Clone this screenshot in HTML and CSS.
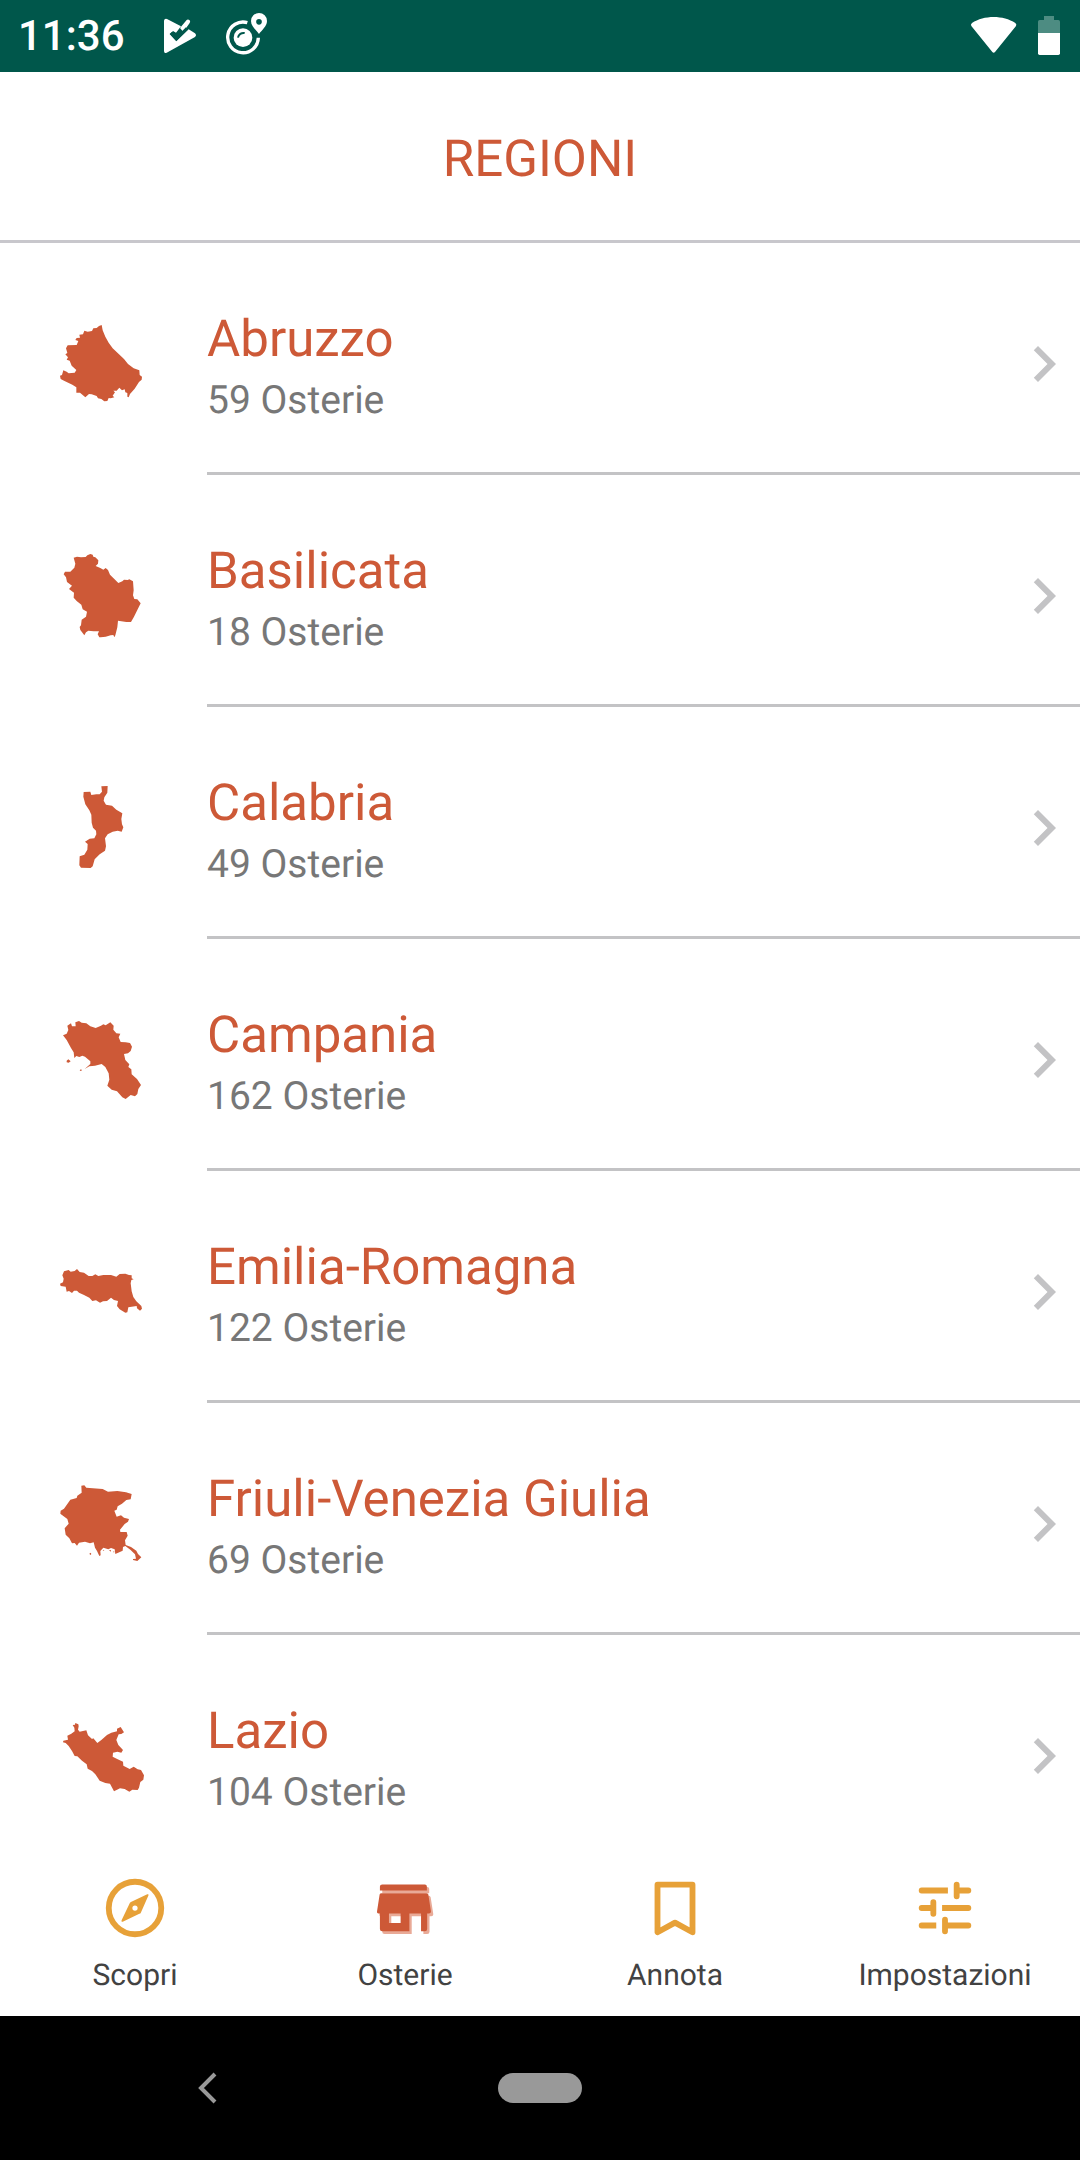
FILE: index.html
```html
<!DOCTYPE html>
<html lang="it">
<head>
<meta charset="utf-8">
<meta name="viewport" content="width=device-width, initial-scale=1">
<title>Regioni</title>
<link rel="stylesheet" href="styles.css">
</head>
<body>
<div class="app">
  <div class="status">
    <span class="clock">11:36</span>
    <svg class="status-play" viewBox="480 0 120 216" aria-hidden="true"><path fill="#fff" d="M492 62Q493 55 501 57L543 79 528 98 519 93 510 102 529 123 566 88 585 100Q591 106 585 111L500 158Q492 161 492 153z"/><path fill="#fff" d="M540 84L560 60Q564 56 569 61 572 65 569 69L550 96z"/><path d="M512 99L529 117 561 85" fill="none" stroke="#00574b" stroke-width="9"/></svg>
    <svg class="status-target" viewBox="672 0 144 216" aria-hidden="true"><path d="M742 68A46 46 0 1 0 775 113" fill="none" stroke="#fff" stroke-width="10"/><circle cx="729" cy="113" r="28" fill="#fff"/><path d="M714 113A17 17 0 0 1 734 99" fill="none" stroke="#00574b" stroke-width="6"/><path fill="#fff" fill-rule="evenodd" d="M777 39A24 24 0 0 1 801 63C801 79 785 91 777 102 769 91 753 79 753 63A24 24 0 0 1 777 39zM777 57A8.500 8.500 0 1 0 777 74 8.500 8.500 0 0 0 777 57z"/></svg>
    <svg class="status-wifi" viewBox="207 0 144 216" aria-hidden="true"><path fill="#fff" d="M214 78Q211 73 216 69C252 45 310 45 346 69Q351 73 348 78L285 156Q281 161 277 156z"/></svg>
    <svg class="status-battery" viewBox="414 0 66 216" aria-hidden="true"><path fill="#4d8c82" d="M414 99V65Q414 60 419 60H432V48H462V60H475Q480 60 480 65V99z"/><path fill="#fff" d="M414 99H480V160Q480 165 475 165H419Q414 165 414 160z"/></svg>
  </div>

  <header class="header"><h1 class="title">REGIONI</h1></header>

  <main class="list-area">
    <ul class="list">
      <li><a class="row" href="#abruzzo">
        <svg class="map" viewBox="60 33 252 252" aria-hidden="true"><path d="M185 45L188 61 196 80 206 98 218 115 237 133 252 147 264 162 281 175 298 181 299 195 306 200 305 209 297 216 284 236 270 252 266 262 262 260 262 249 256 247 254 238 246 241 238 233 230 242 220 242 225 247 218 257 223 262 212 265 206 264 202 273 193 274 184 267 174 265 170 258 155 253 147 252 136 262 120 248 109 248 109 232 97 224 72 212 62 207 60 197 66 195 70 181 80 185 86 190 104 188 109 180 95 167 89 152 80 149 84 142 76 133 82 129 78 115 83 106 110 105 115 93 106 90 110 84 120 83 118 74 129 73 133 62 143 65 156 63 160 55 170 54 177 48z"/></svg>
        <span class="row-body"><span class="row-text"><span class="name">Abruzzo</span><span class="count">59 Osterie</span></span>
        <svg class="chevron" viewBox="0 0 24 24" aria-hidden="true"><path d="M10 6L8.590 7.410 13.170 12l-4.580 4.590L10 18l6-6z"/></svg></span></a></li>
      <li><a class="row" href="#basilicata">
        <svg class="map" viewBox="60 39 252 252" aria-hidden="true"><path d="M101 53L111 50 123 52 137 51 142 46 151 42 158 44 160 50 166 52 175 61 174 71 167 78 181 84 190 89 197 84 204 90 210 104 223 117 235 129 247 124 252 119 263 120 268 118 279 124 281 151 279 166 283 177 292 178 302 190 292 210 282 230 273 246 259 246 234 242 232 262 226 286 223 292 220 285 212 286 197 290 182 292 178 292 173 283 177 274 161 274 145 272 138 277 133 286 121 270 119 261 123 256 125 239 138 230 141 215 128 208 124 194 110 183 101 173 102 158 87 147 96 137 81 126 78 112 71 103 75 95 91 95 103 83 106 71z"/></svg>
        <span class="row-body"><span class="row-text"><span class="name">Basilicata</span><span class="count">18 Osterie</span></span>
        <svg class="chevron" viewBox="0 0 24 24" aria-hidden="true"><path d="M10 6L8.590 7.410 13.170 12l-4.580 4.590L10 18l6-6z"/></svg></span></a></li>
      <li><a class="row" href="#calabria">
        <svg class="map" viewBox="60 45 252 252" aria-hidden="true"><path d="M184 49L203 48 202 68 193 82 191 92 198 104 216 107 229 119 247 130 244 147 246 163 250 172 245 185 233 182 218 185 203 193 195 205 198 229 195 242 179 253 164 268 158 289 152 294 123 293 118 286 119 259 133 254 142 239 143 222 135 215 149 206 163 205 169 193 168 182 159 173 155 158 154 134 148 121 136 103 130 80 131 66 151 65 154 75 169 73 179 73 186 65z"/></svg>
        <span class="row-body"><span class="row-text"><span class="name">Calabria</span><span class="count">49 Osterie</span></span>
        <svg class="chevron" viewBox="0 0 24 24" aria-hidden="true"><path d="M10 6L8.590 7.410 13.170 12l-4.580 4.590L10 18l6-6z"/></svg></span></a></li>
      <li><a class="row" href="#campania">
        <svg class="map" viewBox="60 51 252 252" aria-hidden="true"><path d="M69 106L80 101 85 90 82 77 93 70 96 79 107 79 106 67 117 63 125 68 139 70 151 79 167 84 183 77 190 73 197 76 211 67 221 77 220 89 229 100 241 101 236 112 242 126 257 127 270 129 276 140 272 153 264 160 252 162 256 180 268 193 265 201 274 208 275 223 291 237 303 255 295 267 292 282 285 289 272 285 257 297 247 292 231 274 215 269 202 257 208 239 206 220 196 201 185 192 165 197 148 199 134 207 151 192 151 184 135 170 127 167 118 171 109 168 103 174 101 157 93 144 80 120zM80 182L85 178 92 184 86 188 80 187zM119 211L123 208 126 211 122 213z"/></svg>
        <span class="row-body"><span class="row-text"><span class="name">Campania</span><span class="count">162 Osterie</span></span>
        <svg class="chevron" viewBox="0 0 24 24" aria-hidden="true"><path d="M10 6L8.590 7.410 13.170 12l-4.580 4.590L10 18l6-6z"/></svg></span></a></li>
      <li><a class="row" href="#emilia-romagna">
        <svg class="map" viewBox="60 27 252 252" aria-hidden="true"><path d="M60 131L69 127 71 116 67 106 72 94 86 90 92 95 104 93 111 87 119 96 132 98 146 108 157 108 166 103 175 108 190 105 213 105 229 110 239 102 256 101 267 105 275 106 275 115 281 118 274 120 272 130 275 154 280 171 289 184 304 198 306 206 300 212 291 205 290 198 265 202 262 217 256 218 239 208 231 198 234 183 222 180 213 173 201 183 189 184 180 188 168 181 157 183 148 173 132 165 117 158 111 152 102 152 96 159 87 153 80 155 77 140 62 138z"/></svg>
        <span class="row-body"><span class="row-text"><span class="name">Emilia-Romagna</span><span class="count">122 Osterie</span></span>
        <svg class="chevron" viewBox="0 0 24 24" aria-hidden="true"><path d="M10 6L8.590 7.410 13.170 12l-4.580 4.590L10 18l6-6z"/></svg></span></a></li>
      <li><a class="row" href="#friuli-venezia-giulia">
        <svg class="map" viewBox="60 33 252 252" aria-hidden="true"><path d="M124 47L133 46 139 53 188 57 204 65 232 63 258 67 275 72 272 88 259 90 246 101 233 109 230 119 223 122 230 140 243 136 252 143 267 147 264 155 254 162 240 179 241 186 260 186 263 197 255 211 257 225 273 231 289 242 294 252 304 262 292 273 279 270 279 267 288 266 285 253 271 239 256 228 249 231 248 242 226 252 224 238 213 234 205 238 190 233 181 243 182 256 178 258 171 243 165 233 161 217 150 220 135 215 117 218 111 227 104 219 96 220 88 205 77 194 74 175 86 161 82 147 61 131 62 122 72 116 91 89 110 84 112 77 125 68zM148 251L152 248 154 252 151 255zM188 241L191 239 193 243zM207 241L213 240 212 245zM220 244L223 244 222 249z"/></svg>
        <span class="row-body"><span class="row-text"><span class="name">Friuli-Venezia Giulia</span><span class="count">69 Osterie</span></span>
        <svg class="chevron" viewBox="0 0 24 24" aria-hidden="true"><path d="M10 6L8.590 7.410 13.170 12l-4.580 4.590L10 18l6-6z"/></svg></span></a></li>
      <li><a class="row" href="#lazio">
        <svg class="map" viewBox="60 39 252 252" aria-hidden="true"><path d="M98 75L105 74 106 69 115 73 116 79 114 89 119 95 139 91 144 106 156 117 160 115 172 129 184 120 201 105 214 98 231 94 231 86 242 81 252 97 244 102 236 103 229 120 235 135 249 150 244 158 232 155 219 158 218 170 230 176 249 185 250 197 269 207 281 200 293 208 303 210 312 226 310 239 301 246 297 263 293 270 277 269 268 275 254 267 240 265 222 274 210 251 196 249 179 242 166 223 156 213 143 206 140 193 126 182 112 169 104 168 96 153 86 138 77 129 69 127 70 122 84 119 82 107 94 101 104 94 103 83z"/></svg>
        <span class="row-body"><span class="row-text"><span class="name">Lazio</span><span class="count">104 Osterie</span></span>
        <svg class="chevron" viewBox="0 0 24 24" aria-hidden="true"><path d="M10 6L8.590 7.410 13.170 12l-4.580 4.590L10 18l6-6z"/></svg></span></a></li>
    </ul>
  </main>

  <nav class="tabs" aria-label="Sezioni">
    <a class="tab" href="#scopri">
      <svg class="tab-icon" viewBox="0 0 24 24" aria-hidden="true"><circle cx="12" cy="12" r="9" fill="none" stroke="currentColor" stroke-width="2"/><path fill="currentColor" fill-rule="evenodd" d="M16.200 7.300Q16.800 7.100 16.600 7.700L14 13.600Q13.900 13.900 13.500 14L7.800 16.700Q7.200 16.900 7.400 16.200L10.100 10.500Q10.200 10.100 10.600 9.900zM12 11.100A.9.9 0 1 0 12 12.900.9.9 0 0 0 12 11.100z"/></svg>
      <span>Scopri</span></a>
    <a class="tab tab-active" href="#osterie" aria-current="page">
      <svg class="tab-icon" viewBox="0 0 24 24" aria-hidden="true"><defs><path id="store" fill-rule="evenodd" d="M4.200 3.900H18.800Q19.500 3.900 19.500 4.600V6H3.400V4.600Q3.400 3.900 4.200 3.900zM4 6.900H19.300Q19.800 6.900 20 7.400L20.900 13.200Q20.900 13.900 20.200 13.900H19.600V19.200Q19.600 20 18.800 20H17.500V13.900H13.500V20H4.200Q3.400 20 3.400 19.200V13.900H2.900Q2.300 13.900 2.400 13.200L3.300 7.400Q3.400 6.900 4 6.900zM6.500 13.900V17.100H10.500V13.900z"/></defs><use href="#store" x="0.800" y="0.900" fill="#e9aa97"/><use href="#store" fill="currentColor"/></svg>
      <span>Osterie</span></a>
    <a class="tab" href="#annota">
      <svg class="tab-icon" viewBox="0 0 24 24" aria-hidden="true"><path d="M6 4H18V20.300L12 17 6 20.300z" fill="none" stroke="currentColor" stroke-width="2" stroke-linejoin="round"/></svg>
      <span>Annota</span></a>
    <a class="tab" href="#impostazioni">
      <svg class="tab-icon" viewBox="0 0 24 24" aria-hidden="true"><path fill="currentColor" d="M4 5H13V7H4A1 1 0 0 1 4 5zM17 5H20A1 1 0 0 1 20 7H17V8A1 1 0 0 1 15 8V4A1 1 0 0 1 17 4zM4 11H7V10A1 1 0 0 1 9 10V14A1 1 0 0 1 7 14V13H4A1 1 0 0 1 4 11zM11 11H20A1 1 0 0 1 20 13H11zM4 17H9V19H4A1 1 0 0 1 4 17zM13 17H20A1 1 0 0 1 20 19H13V20A1 1 0 0 1 11 20V16A1 1 0 0 1 13 16z"/></svg>
      <span>Impostazioni</span></a>
  </nav>

  <div class="system-nav">
    <button class="system-button" type="button" aria-label="Indietro"><svg class="back" viewBox="0 0 24 36" aria-hidden="true"><path d="M20 4L6 18 20 32" fill="none" stroke="#999" stroke-width="4"/></svg></button>
    <button class="system-button" type="button" aria-label="Home"><span class="pill"></span></button>
  </div>
</div>
</body>
</html>
```
FILE: styles.css
```css
* {
  box-sizing: border-box;
}

body {
  margin: 0;
  background: #fff;
  font-family: Roboto, "Liberation Sans", sans-serif;
  text-rendering: geometricPrecision;
}

a {
  color: inherit;
  text-decoration: none;
}

svg {
  display: block;
  flex: none;
}

.app {
  display: flex;
  flex-direction: column;
  height: 100vh;
}

/* Status bar */
.status {
  display: flex;
  flex: none;
  align-items: center;
  height: 72px;
  padding: 0 20px 0 18px;
  background: #00574b;
  color: #fff;
}

.status svg {
  height: 72px;
}

.clock {
  padding-top: 2px;
  font-size: 42px;
  font-weight: 500;
  line-height: 72px;
}

.status-play {
  width: 40px;
  margin-left: 35px;
}

.status-target {
  width: 48px;
  margin-left: 24px;
}

.status-wifi {
  width: 48px;
  margin-left: auto;
}

.status-battery {
  width: 22px;
  margin-left: 21px;
}

/* Header */
.header {
  flex: none;
  padding: 56px 0 48px;
  border-bottom: 3px solid #c8c7cc;
  text-align: center;
}

.title {
  margin: 0;
  color: #cd5937;
  font-size: 51px;
  font-weight: 400;
  line-height: 64px;
}

/* Region list */
.list-area {
  flex: 1;
  min-height: 0;
  overflow-y: auto;
  scrollbar-width: none;
}

.list {
  margin: 0;
  padding: 0;
  list-style: none;
}

.row {
  display: flex;
  gap: 63px;
  padding-left: 60px;
}

.map {
  width: 84px;
  height: 84px;
  margin-top: 78px;
  overflow: visible;
  fill: #cd5937;
}

.row-body {
  display: flex;
  flex: 1;
  justify-content: space-between;
  border-bottom: 3px solid #c3c3c5;
}

.row-text {
  display: flex;
  flex-direction: column;
  padding: 65px 0 44px;
}

.name {
  color: #cd5937;
  font-size: 51px;
  line-height: 64px;
}

.count {
  color: #777;
  font-size: 39px;
  line-height: 56px;
}

.chevron {
  width: 72px;
  height: 72px;
  margin-top: 85px;
  fill: #c3c3c5;
}

/* Tab bar */
.tabs {
  display: grid;
  flex: none;
  grid-template-columns: repeat(4, 1fr);
  background: #fff;
}

.tab {
  display: flex;
  flex-direction: column;
  align-items: center;
  gap: 13px;
  padding: 25px 0 20px;
  color: #424242;
  font-size: 30px;
  line-height: 40px;
}

.tab-icon {
  width: 70px;
  height: 70px;
  color: #e7a138;
}

.tab-active .tab-icon {
  color: #cd5937;
}

/* System navigation */
.system-nav {
  display: grid;
  flex: none;
  grid-template-columns: 23fr 14fr 23fr;
  height: 144px;
  background: #000;
}

.system-button {
  display: flex;
  align-items: center;
  justify-content: center;
  padding: 0;
  border: 0;
  background: none;
}

.back {
  width: 24px;
  height: 36px;
}

.pill {
  width: 84px;
  height: 30px;
  border-radius: 15px;
  background: #999;
}
```
